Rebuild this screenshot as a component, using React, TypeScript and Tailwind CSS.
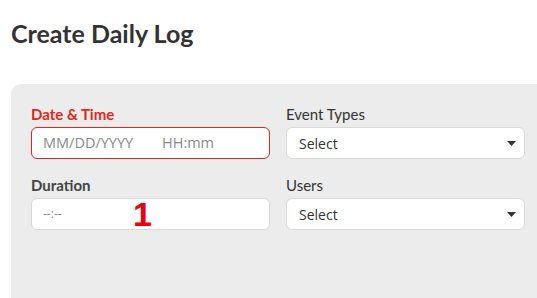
import React from "react";

function Caret() {
  return (
    <svg width="9" height="5" viewBox="0 0 9 5" className="text-[#333]">
      <path d="M0 0h9L4.5 5z" fill="currentColor" />
    </svg>
  );
}

function SelectBox() {
  return (
    <div className="flex h-[32px] items-center justify-between rounded-[6px] border border-[#d9d9d9] bg-white pl-[12px] pr-[8px] font-['Open_Sans',sans-serif] text-[14px] text-[#333]">
      <span>Select</span>
      <Caret />
    </div>
  );
}

export default function App() {
  return (
    <div className="min-h-[298px] bg-white pl-[11px] font-['Lato',sans-serif]">
      <h1 className="pt-[18px] text-[25px] font-bold leading-[30px] text-[#333]">
        Create Daily Log
      </h1>
      <div className="mt-[36px] h-[214px] rounded-tl-[10px] bg-[#ececec] pl-[20px] pr-[12px] pt-[20px]">
        <div className="grid grid-cols-[239px_239px] gap-x-[16px] gap-y-[16px]">
          <div>
            <label className="block text-[15px] font-bold leading-[20px] text-[#e5261a]">
              Date &amp; Time
            </label>
            <div className="mt-[3px] flex h-[32px] items-center rounded-[6px] border border-[#e5261a] bg-white pl-[11px] font-['Open_Sans',sans-serif] text-[14.5px] text-[#8a8a8a]">
              <span className="w-[119px]">MM/DD/YYYY</span>
              <span>HH:mm</span>
            </div>
          </div>
          <div>
            <label className="block text-[15px] leading-[20px] text-[#333]">Event Types</label>
            <div className="mt-[3px]">
              <SelectBox />
            </div>
          </div>
          <div>
            <label className="block text-[15px] font-bold leading-[20px] text-[#444]">Duration</label>
            <div className="relative mt-[3px] flex h-[32px] items-center rounded-[6px] border border-[#d9d9d9] bg-white pl-[11px] font-['Open_Sans',sans-serif] text-[12px] text-[#888]">
              <span>--:--</span>
              <span className="absolute left-[101px] top-[-3px] font-['Liberation_Sans',sans-serif] text-[34px] font-bold leading-[36px] text-[#e8000b]">
                1
              </span>
            </div>
          </div>
          <div>
            <label className="block text-[15px] leading-[20px] text-[#333]">Users</label>
            <div className="mt-[3px]">
              <SelectBox />
            </div>
          </div>
        </div>
      </div>
    </div>
  );
}
